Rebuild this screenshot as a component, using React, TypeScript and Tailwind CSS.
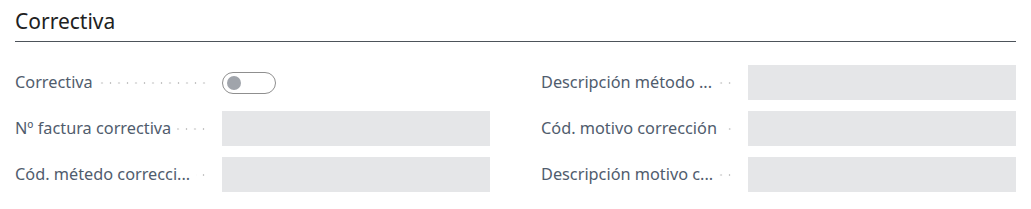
import React from "react";

const Dots = () => (
  <div className="flex-1 min-w-0 h-[2px] ml-[6px] mr-[6px] bg-[radial-gradient(circle,#c4c4c4_0.8px,transparent_1.1px)] bg-[length:8.5px_2px] bg-repeat-x bg-right" />
);

const Field = ({ label, children }: { label: string; children: React.ReactNode }) => (
  <div className="flex items-center h-[35px]">
    <div className="w-[207px] flex items-center shrink-0 pr-[8px]">
      <span className="shrink-0 text-[16.3px] text-[#505c6d] whitespace-nowrap">{label}</span>
      <Dots />
    </div>
    <div className="flex-1 h-full flex items-center">{children}</div>
  </div>
);

const Input = () => <div className="w-full h-[35px] bg-[#e5e6e8]" />;

const Toggle = () => (
  <div className="w-[54px] h-[22px] rounded-full border border-[#8f8f8f] flex items-center px-[4px]">
    <div className="w-[14px] h-[14px] rounded-full bg-[#a0a4ab]" />
  </div>
);

export default function App() {
  return (
    <div className="w-[1031px] h-[209px] bg-white px-[15px] pt-[9px]" style={{ fontFamily: '"Segoe UI", "Noto Sans", "Open Sans", sans-serif' }}>
      <div className="h-[33px] border-b border-[#4d535a] text-[21px] text-[#212121] leading-[24px]">Correctiva</div>
      <div className="grid grid-cols-2 gap-x-[51px] gap-y-[11px] pt-[23px]">
        <Field label="Correctiva"><Toggle /></Field>
        <Field label="Descripción método ..."><Input /></Field>
        <Field label="Nº factura correctiva"><Input /></Field>
        <Field label="Cód. motivo corrección"><Input /></Field>
        <Field label="Cód. métedo correcci..."><Input /></Field>
        <Field label="Descripción motivo c..."><Input /></Field>
      </div>
    </div>
  );
}
